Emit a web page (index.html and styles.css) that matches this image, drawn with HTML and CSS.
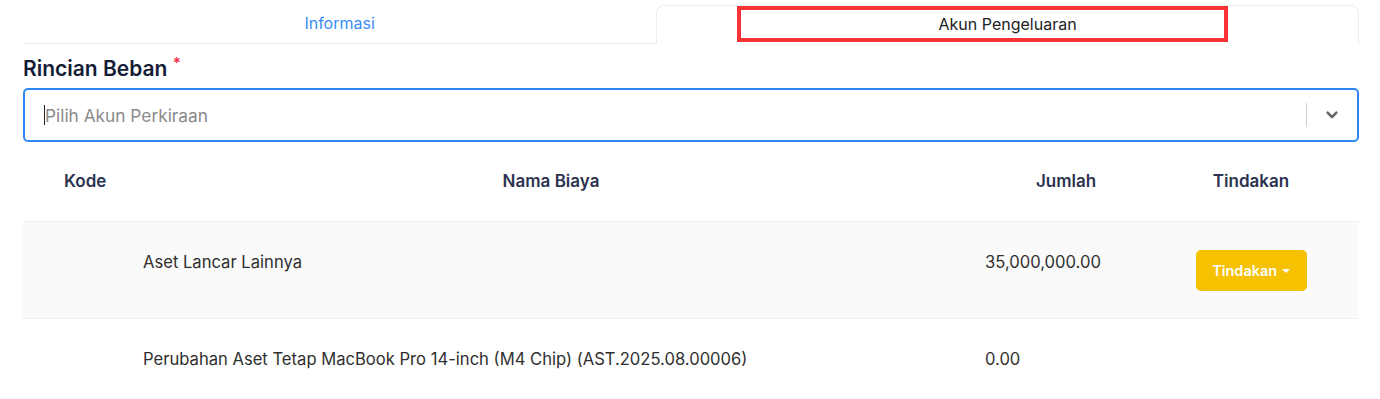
FILE: index.html
```html
<!DOCTYPE html>
<html lang="en">
<head>
  <meta charset="UTF-8">
  <meta name="viewport" content="width=device-width, initial-scale=1.0">
  <title>Rincian Beban</title>
  <link rel="stylesheet" href="styles.css">
</head>
<body>
  <div class="page">

    <div class="tabs">
      <div class="tab">Informasi</div>
      <div class="tab active">Akun Pengeluaran</div>
      <div class="highlight"></div>
    </div>

    <h2 class="label">Rincian Beban <span class="required">*</span></h2>

    <div class="select">
      <div class="select-value"><span class="caret"></span>Pilih Akun Perkiraan</div>
      <div class="select-sep"></div>
      <div class="select-arrow">
        <svg width="16" height="16" viewBox="0 0 20 20"><path d="M4.5 7 L10 12.5 L15.5 7" fill="none" stroke="#666" stroke-width="3.2" stroke-linecap="round" stroke-linejoin="round"/></svg>
      </div>
    </div>

    <div class="table">
      <div class="row head">
        <div class="cell kode">Kode</div>
        <div class="cell nama">Nama Biaya</div>
        <div class="cell jumlah">Jumlah</div>
        <div class="cell aksi">Tindakan</div>
        <div class="cell"></div>
      </div>
      <div class="row striped">
        <div class="cell"></div>
        <div class="cell">Aset Lancar Lainnya</div>
        <div class="cell amount">35,000,000.00</div>
        <div class="cell aksi"><button class="btn-action">Tindakan <span class="dropcaret"></span></button></div>
        <div class="cell"></div>
      </div>
      <div class="row">
        <div class="cell"></div>
        <div class="cell">Perubahan Aset Tetap MacBook Pro 14-inch (M4 Chip) (AST.2025.08.00006)</div>
        <div class="cell amount">0.00</div>
        <div class="cell aksi"></div>
        <div class="cell"></div>
      </div>
    </div>

  </div>
</body>
</html>
```

FILE: styles.css
```css
* {
  box-sizing: border-box;
  font-family: Inter, "Noto Sans", Arial, sans-serif;
}

body {
  margin: 0;
  background: white;
}

.page {
  width: 1336px;
  margin-left: 23px;
  padding-top: 5px;
}

/* Tabs */
.tabs {
  position: relative;
  display: flex;
  height: 39px;
}
.tab {
  flex: 1 1 auto;
  text-align: center;
  font-size: 16px;
  line-height: 36px;
  color: #3a8df5;
  border-bottom: 1px solid #ececec;
}
.tab.active {
  color: #222;
  border: 1px solid #ececec;
  border-bottom: none;
  border-radius: 8px 8px 0 0;
}

/* red annotation box over the active tab */
.highlight {
  position: absolute;
  left: 714px;
  top: 1px;
  width: 491px;
  height: 36px;
  border: 4px solid #f63436;
}

/* Label */
.label {
  margin: 10px 0 0 0;
  font-size: 21px;
  font-weight: 600;
  line-height: 30px;
  color: #141d35;
}
.required {
  color: #f0284a;
  font-size: 15px;
  vertical-align: top;
  position: relative;
  top: -6px;
}

/* Select */
.select {
  margin-top: 4px;
  height: 54px;
  border: 2px solid #2f87f5;
  border-radius: 5px;
  display: flex;
  align-items: center;
}
.select-value {
  flex: 1;
  padding-left: 19px;
  font-size: 17.3px;
  color: #8a8a8a;
  display: flex;
  align-items: center;
}
.caret {
  display: inline-block;
  width: 1px;
  height: 20px;
  background: #222;
}
.select-sep {
  width: 1px;
  height: 24px;
  background: #d0d0d0;
}
.select-arrow {
  width: 50px;
  display: flex;
  justify-content: center;
  align-items: center;
}

/* Table */
.row {
  display: grid;
  grid-template-columns: 108px 840px 190px 180px 1fr;
  border-bottom: 1px solid #f2f2f2;
}
.row:last-child {
  border-bottom: none;
}
.row.striped {
  background: #fafafa;
}
.cell {
  padding: 28px 12px 27px 12px;
  font-size: 16.6px;
  line-height: 24px;
  color: #2f2f2f;
}
.cell.amount {
  padding-left: 14px;
}
.row.head .cell {
  padding: 27px 12px 28px 12px;
  font-size: 17px;
  font-weight: 600;
  color: #2b3350;
}
.row.head .kode {
  padding-left: 41px;
}
.row.head .nama,
.row.head .jumlah {
  text-align: center;
}
.aksi {
  text-align: center;
}

.btn-action {
  background: #f6c100;
  border: none;
  border-radius: 5px;
  width: 111px;
  height: 41px;
  color: white;
  font-size: 14.5px;
  font-weight: 600;
  cursor: pointer;
}
.dropcaret {
  display: inline-block;
  width: 0;
  height: 0;
  border-left: 4px solid transparent;
  border-right: 4px solid transparent;
  border-top: 4px solid white;
  vertical-align: 3px;
  margin-left: 1px;
}
```
